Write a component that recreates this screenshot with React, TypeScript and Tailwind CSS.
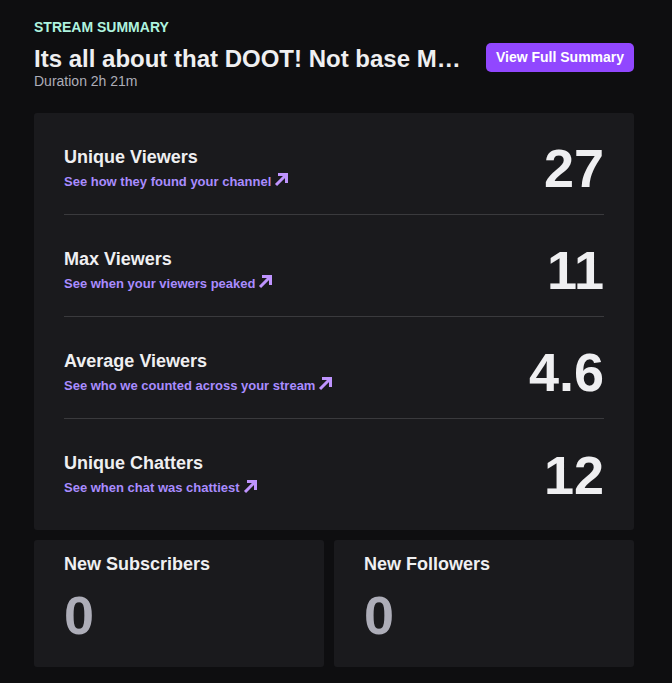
const rows = [
  { title: "Unique Viewers", link: "See how they found your channel", value: "27" },
  { title: "Max Viewers", link: "See when your viewers peaked", value: "11" },
  { title: "Average Viewers", link: "See who we counted across your stream", value: "4.6" },
  { title: "Unique Chatters", link: "See when chat was chattiest", value: "12" },
];

function Arrow() {
  return (
    <svg width="15" height="15" viewBox="0 0 15 15" className="ml-[3px] -mt-[4px] text-[#bf94ff]">
      <path d="M2 13 L12.5 2.5" stroke="currentColor" strokeWidth="3" fill="none" />
      <path d="M4 2.5 H12.5 V11" stroke="currentColor" strokeWidth="3" fill="none" />
    </svg>
  );
}

export default function App() {
  return (
    <div className="min-h-[683px] bg-[#0e0e10] pl-[34px] pr-[38px] pt-[19px] pb-4 font-['Liberation_Sans',Arial,sans-serif]">
      <header className="flex items-start justify-between">
        <div className="w-[430px] min-w-0">
          <div className="text-[14px] font-bold leading-4 text-[#aef3df]">STREAM SUMMARY</div>
          <h1 className="mt-[10px] truncate text-[24px] font-bold leading-7 text-[#efeff1]">
            Its all about that DOOT! Not base Minecraft today
          </h1>
          <div className="text-[14px] leading-4 text-[#adadb8]">Duration 2h 21m</div>
        </div>
        <button className="mt-[24px] h-[29px] w-[148px] rounded-[5px] bg-[#9147ff] text-[14px] font-bold text-white">
          View Full Summary
        </button>
      </header>

      <section className="mt-[24px] rounded-[3px] bg-[#1a1a1d] px-[30px]">
        {rows.map((r, i) => (
          <div
            key={i}
            className="flex h-[102px] items-center justify-between border-b border-[#3a3a3d] pt-[9px] last:h-[111px] last:border-b-0 last:pb-[9px]"
          >
            <div>
              <div className="text-[18px] font-bold leading-6 text-[#efeff1]">{r.title}</div>
              <a className="mt-[3px] flex items-center text-[13px] font-bold text-[#a98cff]">
                {r.link}
                <Arrow />
              </a>
            </div>
            <div className="text-[54px] font-bold leading-none text-[#efeff1]">{r.value}</div>
          </div>
        ))}
      </section>

      <div className="mt-[10px] grid grid-cols-[290px_300px] gap-[10px]">
        {["New Subscribers", "New Followers"].map((t) => (
          <div key={t} className="h-[127px] rounded-[3px] bg-[#1a1a1d] px-[30px] pt-[12px]">
            <div className="text-[18px] font-bold leading-6 text-[#efeff1]">{t}</div>
            <div className="mt-[12px] text-[54px] font-bold leading-none text-[#adadb8]">0</div>
          </div>
        ))}
      </div>
    </div>
  );
}
